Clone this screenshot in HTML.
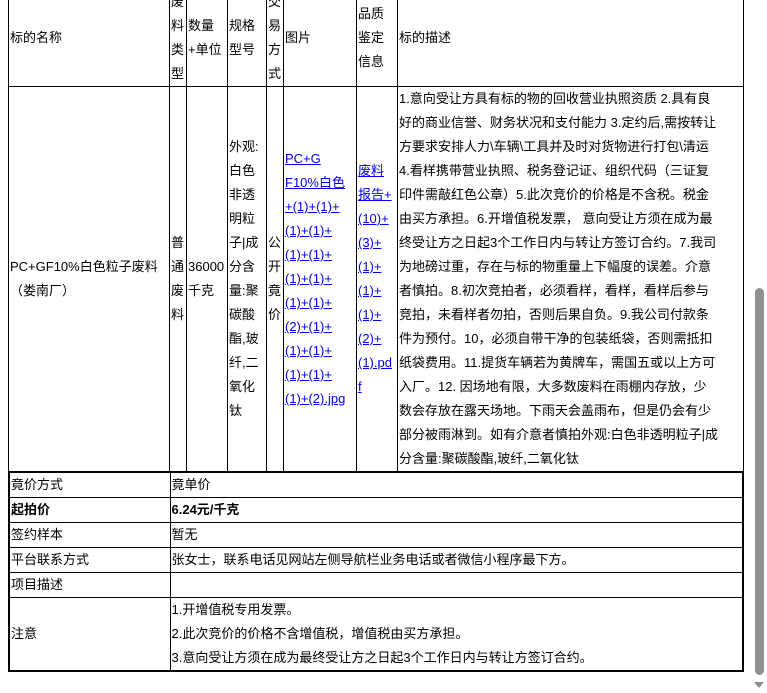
<!DOCTYPE html>
<html><head><meta charset="utf-8"><style>
html,body{margin:0;padding:0;width:767px;height:693px;overflow:hidden;background:#fff;}
body{font-family:"Liberation Sans","Noto Sans CJK SC",sans-serif;font-size:13px;color:#000;position:relative;}
table{border-collapse:collapse;table-layout:fixed;position:absolute;left:8px;}
td{border:1px solid #000;padding:0 0 0 1px;line-height:24px;vertical-align:middle;white-space:nowrap;overflow:hidden;}
a{color:#00e;text-decoration:underline;}
#t1{top:-11px;width:736px;}
#t2{top:471px;width:736px;border:2px solid #000;}
#t2 td{line-height:24px;height:24px;}
.sb{position:absolute;left:755px;top:288px;width:9px;height:387px;background:#909090;border-radius:5px;}
.ar{position:absolute;left:754px;top:682px;width:0;height:0;border-left:5px solid transparent;border-right:5px solid transparent;border-top:6px solid #909090;}
</style></head><body>
<table id="t1">
<colgroup><col style="width:161px"><col style="width:17px"><col style="width:41px"><col style="width:39px"><col style="width:17px"><col style="width:73px"><col style="width:41px"><col style="width:346px"></colgroup>
<tr style="height:97px">
<td>标的名称</td>
<td>废<br>料<br>类<br>型</td>
<td>数量<br>+单位</td>
<td>规格<br>型号</td>
<td>交<br>易<br>方<br>式</td>
<td>图片</td>
<td>品质<br>鉴定<br>信息</td>
<td>标的描述</td>
</tr>
<tr style="height:384px">
<td>PC+GF10%白色粒子废料<br>（娄南厂）</td>
<td>普<br>通<br>废<br>料</td>
<td>36000<br>千克</td>
<td>外观:<br>白色<br>非透<br>明粒<br>子|成<br>分含<br>量:聚<br>碳酸<br>酯,玻<br>纤,二<br>氧化<br>钛</td>
<td>公<br>开<br>竟<br>价</td>
<td><a>PC+G<br>F10%白色<br>+(1)+(1)+<br>(1)+(1)+<br>(1)+(1)+<br>(1)+(1)+<br>(1)+(1)+<br>(2)+(1)+<br>(1)+(1)+<br>(1)+(1)+<br>(1)+(2).jpg</a></td>
<td><a>废料<br>报告+<br>(10)+<br>(3)+<br>(1)+<br>(1)+<br>(1)+<br>(2)+<br>(1).pd<br>f</a></td>
<td>1.意向受让方具有标的物的回收营业执照资质 2.具有良<br>好的商业信誉、财务状况和支付能力 3.定约后,需按转让<br>方要求安排人力\车辆\工具并及时对货物进行打包\清运<br>4.看样携带营业执照、税务登记证、组织代码（三证复<br>印件需敲红色公章）5.此次竞价的价格是不含税。税金<br>由买方承担。6.开增值税发票， 意向受让方须在成为最<br>终受让方之日起3个工作日内与转让方签订合约。7.我司<br>为地磅过重，存在与标的物重量上下幅度的误差。介意<br>者慎拍。8.初次竞拍者，必须看样，看样，看样后参与<br>竞拍，未看样者勿拍，否则后果自负。9.我公司付款条<br>件为预付。10，必须自带干净的包装纸袋，否则需抵扣<br>纸袋费用。11.提货车辆若为黄牌车，需国五或以上方可<br>入厂。12. 因场地有限，大多数废料在雨棚内存放，少<br>数会存放在露天场地。下雨天会盖雨布，但是仍会有少<br>部分被雨淋到。如有介意者慎拍外观:白色非透明粒子|成<br>分含量:聚碳酸酯,玻纤,二氧化钛</td>
</tr>
</table>
<table id="t2">
<colgroup><col style="width:161px"><col></colgroup>
<tr><td>竟价方式</td><td>竟单价</td></tr>
<tr><td><b>起拍价</b></td><td><b>6.24元/千克</b></td></tr>
<tr><td>签约样本</td><td>暂无</td></tr>
<tr><td>平台联系方式</td><td>张女士，联系电话见网站左侧导航栏业务电话或者微信小程序最下方。</td></tr>
<tr><td>项目描述</td><td></td></tr>
<tr><td>注意</td><td>1.开增值税专用发票。<br>2.此次竞价的价格不含增值税，增值税由买方承担。<br>3.意向受让方须在成为最终受让方之日起3个工作日内与转让方签订合约。</td></tr>
</table>
<div class="sb"></div><div class="ar"></div>
</body></html>
